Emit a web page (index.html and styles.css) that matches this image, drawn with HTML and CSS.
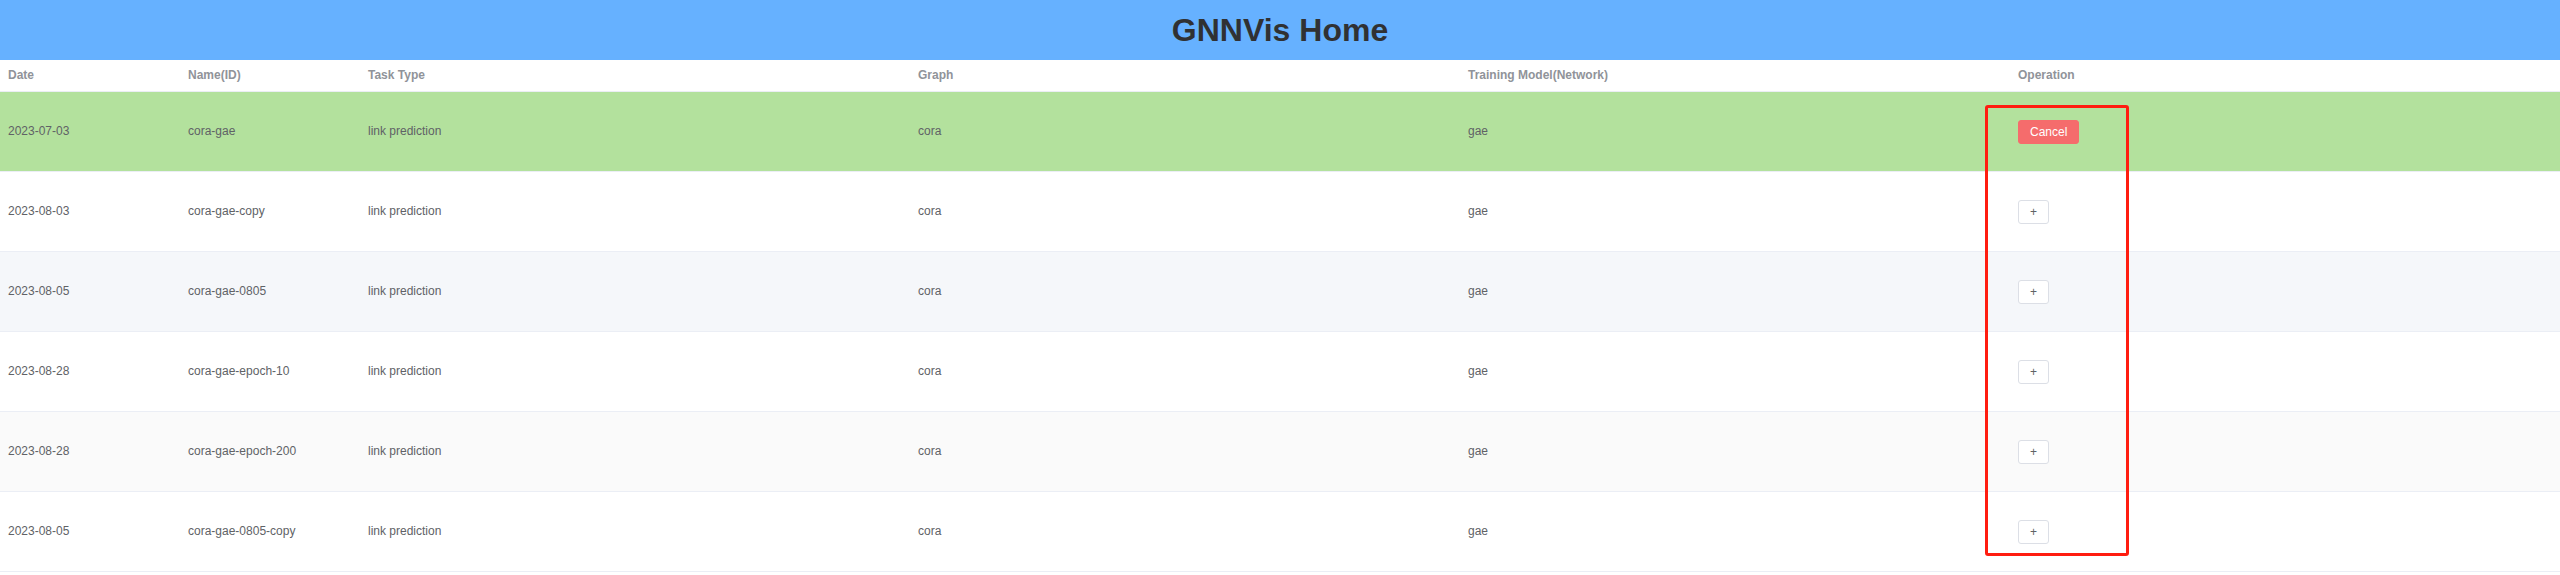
FILE: index.html
```html
<!DOCTYPE html>
<html lang="en">
<head>
<meta charset="utf-8">
<title>GNNVis Home</title>
<link rel="stylesheet" href="styles.css">
</head>
<body>
<header class="page-header"><h1 class="page-title">GNNVis Home</h1></header>
<main>
<table class="runs">
<colgroup><col class="col-fixed"><col class="col-fixed"><col><col><col><col></colgroup>
<thead>
<tr><th scope="col">Date</th><th scope="col">Name(ID)</th><th scope="col">Task Type</th><th scope="col">Graph</th><th scope="col">Training Model(Network)</th><th scope="col">Operation</th></tr>
</thead>
<tbody>
<tr class="row-selected"><td>2023-07-03</td><td>cora-gae</td><td>link prediction</td><td>cora</td><td>gae</td><td class="cell-anchor"><button type="button" class="btn btn-danger">Cancel</button><div class="highlight"></div></td></tr>
<tr><td>2023-08-03</td><td>cora-gae-copy</td><td>link prediction</td><td>cora</td><td>gae</td><td><button type="button" class="btn">+</button></td></tr>
<tr class="row-hover"><td>2023-08-05</td><td>cora-gae-0805</td><td>link prediction</td><td>cora</td><td>gae</td><td><button type="button" class="btn">+</button></td></tr>
<tr><td>2023-08-28</td><td>cora-gae-epoch-10</td><td>link prediction</td><td>cora</td><td>gae</td><td><button type="button" class="btn">+</button></td></tr>
<tr class="row-striped"><td>2023-08-28</td><td>cora-gae-epoch-200</td><td>link prediction</td><td>cora</td><td>gae</td><td><button type="button" class="btn">+</button></td></tr>
<tr><td>2023-08-05</td><td>cora-gae-0805-copy</td><td>link prediction</td><td>cora</td><td>gae</td><td><button type="button" class="btn">+</button></td></tr>
</tbody>
</table>
</main>
</body>
</html>
```
FILE: styles.css
```css
* {
  box-sizing: border-box;
}

body {
  margin: 0;
  background: #fff;
  color: #606266;
  font-family: "Liberation Sans", Arial, sans-serif;
  font-size: 12px;
}

.page-header {
  background: #66b1ff;
  color: #303133;
  text-align: center;
}

.page-title {
  margin: 0;
  font-size: 32px;
  line-height: 60px;
}

.runs {
  width: 100%;
  table-layout: fixed;
  border-collapse: separate;
  border-spacing: 0;
}

.col-fixed {
  width: 180px;
}

.runs th,
.runs td {
  padding: 0 8px;
  border-bottom: 1px solid #ebeef5;
  text-align: left;
  vertical-align: middle;
}

.runs th {
  height: 32px;
  padding-bottom: 2px;
  color: #909399;
}

.runs td {
  height: 80px;
  line-height: 23px;
}

.row-selected {
  background: #b3e19d;
}

.row-hover {
  background: #f5f7fa;
}

.row-striped {
  background: #fafafa;
}

.btn {
  display: block;
  height: 24px;
  padding: 0 11px;
  border: 1px solid #dcdfe6;
  border-radius: 3px;
  background: #fff;
  color: #606266;
  font: inherit;
  line-height: 22px;
}

.btn-danger {
  border-color: #f56c6c;
  background: #f56c6c;
  color: #fff;
}

.cell-anchor {
  position: relative;
}

/* Outline around the operation buttons of all rows */
.highlight {
  position: absolute;
  z-index: 1;
  top: 13px;
  left: -25px;
  width: 144px;
  height: 451px;
  border: 3px solid #ff1d10;
  border-radius: 3px;
  pointer-events: none;
}
```
